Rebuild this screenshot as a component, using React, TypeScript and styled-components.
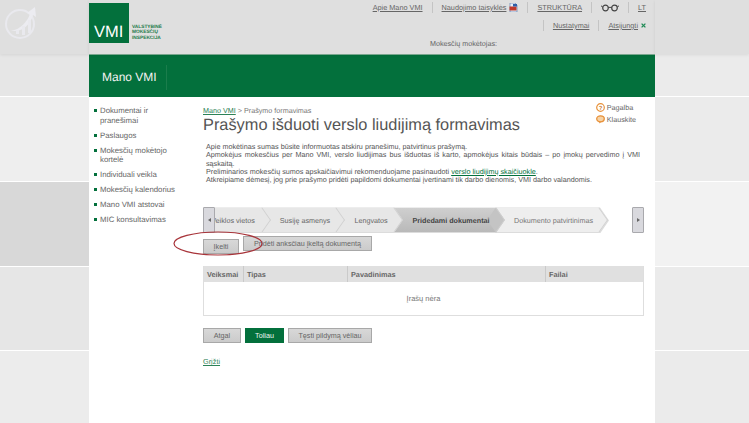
import React from "react";
import styled, { createGlobalStyle } from "styled-components";

const GlobalStyle = createGlobalStyle`
  html, body {
    margin: 0;
    padding: 0;
    height: 100%;
    overflow: hidden;
    background: #fff;
    font-family: "Liberation Sans", Arial, sans-serif;
    color: #555;
    text-rendering: geometricPrecision;
  }
`;

const Page = styled.div`
  width: 749px;
  height: 423px;
  display: grid;
  grid-template-columns: 89px 566px 94px;
  grid-template-rows: 54px 1fr;
  overflow: hidden;
  position: relative;
`;

const TopBand = styled.div`
  background: #dfdfdf;
  box-shadow: 0 1px 3px rgba(0, 0, 0, 0.08);
  position: relative;
  z-index: 1;
`;

const LogoCorner = styled(TopBand)`
  padding: 7px 0 0 5px;
`;

const Header = styled(TopBand)`
  display: flex;
  justify-content: space-between;
`;

const Logo = styled.div`
  display: flex;
  align-items: flex-end;
  gap: 3px;
  margin-top: 3px;
  height: 40px;
`;

const LogoBox = styled.div`
  width: 40px;
  height: 40px;
  background: #03703c;
  color: #fff;
  font-size: 16.5px;
  line-height: 16px;
  padding: 21px 0 0 5px;
  box-sizing: border-box;
`;

const LogoText = styled.div`
  color: #1d7a4a;
  font-size: 4.8px;
  line-height: 5.4px;
  font-weight: 700;
  padding-bottom: 2px;
`;

const HeaderRight = styled.div`
  display: flex;
  flex-direction: column;
  align-items: flex-end;
  padding-right: 9px;
`;

const NavRow = styled.div<{ $top: number }>`
  display: flex;
  align-items: center;
  height: 11px;
  margin-top: ${({ $top }) => $top}px;
  font-size: 7.3px;
  color: #666;
`;

const NavLink = styled.a`
  color: #666;
  text-decoration: underline;
  display: inline-flex;
  align-items: center;
  gap: 3px;
`;

const NavSep = styled.span`
  width: 1px;
  height: 11px;
  background: #c4c4c4;
  margin: 0 9px;
`;

const CloseMark = styled.span`
  display: inline-flex;
  margin-left: 3px;
`;

const Payer = styled.div`
  font-size: 7.2px;
  line-height: 11px;
  color: #666;
  margin-top: 7px;
  margin-right: 149px;
`;

const SideColumn = styled.div`
  display: flex;
  flex-direction: column;
  gap: 1px;
  background: #fff;
`;

const Band = styled.div<{ $h: number; $bg: string }>`
  height: ${({ $h }) => $h}px;
  flex: none;
  background: ${({ $bg }) => $bg};
`;

const Center = styled.div`
  display: flex;
  flex-direction: column;
  background: #fff;
`;

const Hero = styled.div`
  height: 43px;
  flex: none;
  box-sizing: border-box;
  background: #03703c;
  border-top: 1px solid #7fb096;
  display: flex;
  align-items: center;
  padding-left: 13px;
  color: #f2f2f2;
  font-size: 12px;
`;

const HeroTitle = styled.div`
  padding-right: 9px;
  line-height: 25px;
  border-right: 1px solid #1b7d4c;
  margin-top: 3px;
`;

const Body = styled.div`
  display: grid;
  grid-template-columns: 114px 441px;
  padding-top: 9px;
`;

const SideNav = styled.ul`
  list-style: none;
  margin: 0;
  padding: 0 0 0 5px;
`;

const SideItem = styled.li`
  position: relative;
  padding-left: 6px;
  font-size: 7.8px;
  line-height: 9.5px;
  color: #666;
  margin-bottom: 5.5px;
  width: 78px;

  &::before {
    content: "";
    position: absolute;
    left: 0;
    top: 3px;
    width: 3px;
    height: 3px;
    background: #03703c;
  }
`;

const Content = styled.div`
  display: flex;
  flex-direction: column;
`;

const TitleRow = styled.div`
  display: flex;
  justify-content: space-between;
`;

const Breadcrumb = styled.div`
  font-size: 7.2px;
  line-height: 10px;
  color: #777;
  a {
    color: #2c8257;
    text-decoration: underline;
  }
`;

const Title = styled.h1`
  margin: -1px 0 0;
  font-weight: 400;
  font-size: 16.35px;
  line-height: 21px;
  color: #555;
  white-space: nowrap;
`;

const HelpList = styled.div`
  display: flex;
  flex-direction: column;
  gap: 3px;
  padding-right: 8px;
  margin-top: -3px;
`;

const HelpLink = styled.div`
  display: flex;
  align-items: center;
  gap: 2px;
  font-size: 7.2px;
  line-height: 9px;
  color: #666;
`;

const Intro = styled.div`
  margin: 7px 4px 0 3px;
  font-size: 7.22px;
  line-height: 8.3px;
  color: #555;

  p {
    margin: 0;
    text-align: justify;
  }
  a {
    color: #03703c;
    text-decoration: underline;
  }
`;

const Stepper = styled.div`
  position: relative;
  margin-top: 23px;
  height: 26px;
`;

const StepTrack = styled.div`
  width: 406px;
  height: 26px;
  display: flex;
  overflow: hidden;
  box-sizing: border-box;
  clip-path: polygon(0 0, 397px 0, 100% 50%, 397px 100%, 0 100%);
  background: #dcdcdc;
`;

const Step = styled.div<{ $w: number; $kind?: "active" | "next" }>`
  position: relative;
  flex: none;
  box-sizing: border-box;
  width: ${({ $w }) => $w}px;
  padding-left: 10px;
  display: flex;
  align-items: center;
  justify-content: center;
  margin: 1px 0;
  font-size: 7.2px;
  white-space: nowrap;
  color: ${({ $kind }) =>
    $kind === "active" ? "#444" : $kind === "next" ? "#777" : "#666"};
  font-weight: ${({ $kind }) => ($kind === "active" ? 700 : 400)};
  background: ${({ $kind }) =>
    $kind === "active"
      ? "linear-gradient(#cfcfcf, #b9b9b9)"
      : $kind === "next"
        ? "#eeeeee"
        : "#e7e7e7"};

  &:first-child {
    padding-left: 0;
  }

  &::after {
    content: "";
    position: absolute;
    right: -8px;
    top: 50%;
    width: 17px;
    height: 17px;
    transform: translateY(-50%) scaleX(0.7) rotate(45deg);
    background: ${({ $kind }) =>
      $kind === "active" ? "#c4c4c4" : $kind === "next" ? "#eeeeee" : "#e7e7e7"};
    border-top: 1px solid #d0d0d0;
    border-right: 1px solid #d0d0d0;
    z-index: 1;
  }
`;

const StepLabel = styled.span`
  position: relative;
  z-index: 2;
`;

const StepArrow = styled.div<{ $side: "left" | "right" }>`
  position: absolute;
  top: 0;
  ${({ $side }) => ($side === "left" ? "left: 0;" : "right: 0;")}
  width: 12px;
  height: 26px;
  box-sizing: border-box;
  z-index: 3;
  background: #d9d9de;
  border: 1px solid #a9a9ad;
  border-radius: 1px;
  display: flex;
  align-items: center;
  justify-content: center;

  &::before {
    content: "";
    border-top: 2px solid transparent;
    border-bottom: 2px solid transparent;
    ${({ $side }) =>
      $side === "left"
        ? "border-right: 3px solid #666;"
        : "border-left: 3px solid #666;"}
  }
`;

const ButtonRow = styled.div<{ $top: number }>`
  display: flex;
  gap: 4px;
  margin-top: ${({ $top }) => $top}px;
`;

const Button = styled.button<{ $w: number; $primary?: boolean }>`
  width: ${({ $w }) => $w}px;
  height: 15px;
  padding: 0;
  box-sizing: border-box;
  font-family: inherit;
  font-size: 7.2px;
  color: ${({ $primary }) => ($primary ? "#eef5f0" : "#666")};
  background: ${({ $primary }) =>
    $primary ? "#03703c" : "linear-gradient(#d8d8d8, #cbcbcb)"};
  border: 1px solid ${({ $primary }) => ($primary ? "#03703c" : "#a8a8a8")};
`;

const UploadWrap = styled.div`
  position: relative;
`;

const Ellipse = styled.svg`
  position: absolute;
  left: -30px;
  top: -5px;
  width: 90px;
  height: 25px;
  z-index: 3;
  pointer-events: none;
`;

const Table = styled.div`
  margin-top: 12px;
  border: 1px solid #dedede;
  border-top: 0;
  height: 50px;
  box-sizing: border-box;
`;

const TableHead = styled.div`
  display: grid;
  grid-template-columns: 40px 104px 198px 1fr;
  height: 16px;
  background: #e0e0e0;
  font-size: 7.3px;
  font-weight: 700;
  color: #666;
`;

const HeadCell = styled.div`
  display: flex;
  align-items: center;
  padding-left: 3px;
  border-right: 1px solid #cacaca;

  &:last-child {
    border-right: 0;
  }
`;

const EmptyRow = styled.div`
  height: 33px;
  display: flex;
  align-items: center;
  justify-content: center;
  font-size: 7.5px;
  color: #777;
`;

const BackLink = styled.a`
  display: block;
  margin-top: 14px;
  font-size: 7.3px;
  line-height: 10px;
  color: #2c8257;
  text-decoration: underline;
`;

const menu = [
  "Dokumentai ir pranešimai",
  "Paslaugos",
  "Mokesčių mokėtojo kortelė",
  "Individuali veikla",
  "Mokesčių kalendorius",
  "Mano VMI atstovai",
  "MIC konsultavimas",
];

const leftBands: [number, string][] = [
  [42, "#e6e6e6"],
  [84, "#eeeeee"],
  [84, "#d8d8d8"],
  [83, "#e6e6e6"],
  [80, "#ececec"],
];

const rightBands: [number, string][] = [
  [42, "#ebebeb"],
  [84, "#ebebeb"],
  [84, "#f2f2f2"],
  [83, "#ebebeb"],
  [80, "#ebebeb"],
];

const CornerMark = () => (
  <svg width="32" height="32" viewBox="0 0 32 32">
    <circle cx="15" cy="17" r="14" fill="none" stroke="#e9e9ee" strokeWidth="2" />
    <path d="M6 24 C16 22 22 15 25 7 L22 6 L30 0 L31 10 L28 8 C25 18 18 25 6 24Z" fill="#ececf1" />
    <path d="M11 27h3v-4h-3zM17 28h3V19h-3zM23 26h3V13h-3z" fill="#e9e9ee" />
  </svg>
);

const FileIcon = () => (
  <svg width="9" height="9" viewBox="0 0 9 9">
    <path d="M1 0h5l2 2v7H1z" fill="#e8eef6" stroke="#4a74b0" strokeWidth="0.6" />
    <rect x="0.5" y="3.5" width="7" height="4" fill="#c0392b" />
    <rect x="4" y="1" width="4" height="2.5" fill="#2f5fa8" />
  </svg>
);

const GlassesIcon = () => (
  <svg width="18" height="8" viewBox="0 0 18 8">
    <circle cx="4.5" cy="4" r="2.8" fill="none" stroke="#444" strokeWidth="1.2" />
    <circle cx="13.5" cy="4" r="2.8" fill="none" stroke="#444" strokeWidth="1.2" />
    <path d="M7.2 3.4h3.6M1.7 3L0 1.8M16.3 3L18 1.8" stroke="#444" strokeWidth="1" />
  </svg>
);

const CloseIcon = () => (
  <svg width="5" height="5" viewBox="0 0 5 5">
    <path d="M0.6 0.6L4.4 4.4M4.4 0.6L0.6 4.4" stroke="#1f8a55" strokeWidth="1.3" />
  </svg>
);

const QuestionIcon = () => (
  <svg width="9" height="9" viewBox="0 0 9 9">
    <circle cx="4.5" cy="4.5" r="3.8" fill="#fff" stroke="#e8913a" strokeWidth="1.2" />
    <text x="4.5" y="6.6" fontSize="6" fontWeight="700" textAnchor="middle" fill="#c77a28" fontFamily="Liberation Sans">
      ?
    </text>
  </svg>
);

const BubbleIcon = () => (
  <svg width="9" height="9" viewBox="0 0 9 9">
    <ellipse cx="4.5" cy="3.8" rx="3.8" ry="3" fill="#f6d3a6" stroke="#e8913a" strokeWidth="1.3" />
    <path d="M3 6.5L3.6 8.6L5.4 6.6" fill="#e8913a" />
  </svg>
);

const App: React.FC = () => {
  return (
    <>
      <GlobalStyle />
      <Page>
        <LogoCorner>
          <CornerMark />
        </LogoCorner>
        <Header>
          <Logo>
            <LogoBox>VMI</LogoBox>
            <LogoText>
              VALSTYBINĖ
              <br />
              MOKESČIŲ
              <br />
              INSPEKCIJA
            </LogoText>
          </Logo>
          <HeaderRight>
            <NavRow $top={2}>
              <NavLink>Apie Mano VMI</NavLink>
              <NavSep />
              <NavLink>
                Naudojimo taisyklės
                <FileIcon />
              </NavLink>
              <NavSep />
              <NavLink>STRUKTŪRA</NavLink>
              <NavSep />
              <GlassesIcon />
              <NavSep />
              <NavLink>LT</NavLink>
            </NavRow>
            <NavRow $top={7}>
              <NavSep />
              <NavLink>Nustatymai</NavLink>
              <NavSep />
              <NavLink>Atsijungti</NavLink>
              <CloseMark>
                <CloseIcon />
              </CloseMark>
            </NavRow>
            <Payer>Mokesčių mokėtojas:</Payer>
          </HeaderRight>
        </Header>
        <TopBand />
        <SideColumn>
          {leftBands.map(([h, bg], i) => (
            <Band key={i} $h={h} $bg={bg} />
          ))}
        </SideColumn>
        <Center>
          <Hero>
            <HeroTitle>Mano VMI</HeroTitle>
          </Hero>
          <Body>
            <SideNav>
              {menu.map((item) => (
                <SideItem key={item}>{item}</SideItem>
              ))}
            </SideNav>
            <Content>
              <TitleRow>
                <div>
                  <Breadcrumb>
                    <a>Mano VMI</a> &gt; Prašymo formavimas
                  </Breadcrumb>
                  <Title>Prašymo išduoti verslo liudijimą formavimas</Title>
                </div>
                <HelpList>
                  <HelpLink>
                    <QuestionIcon />
                    Pagalba
                  </HelpLink>
                  <HelpLink>
                    <BubbleIcon />
                    Klauskite
                  </HelpLink>
                </HelpList>
              </TitleRow>
              <Intro>
                <p>Apie mokėtinas sumas būsite informuotas atskiru pranešimu, patvirtinus prašymą.</p>
                <p>
                  Apmokėjus mokesčius per Mano VMI, verslo liudijimas bus išduotas iš karto, apmokėjus kitais
                  būdais – po įmokų pervedimo į VMI sąskaitą.
                </p>
                <p>
                  Preliminarios mokesčių sumos apskaičiavimui rekomenduojame pasinaudoti{" "}
                  <a>verslo liudijimų skaičiuokle</a>.
                </p>
                <p>
                  Atkreipiame dėmesį, jog prie prašymo pridėti papildomi dokumentai įvertinami tik darbo
                  dienomis, VMI darbo valandomis.
                </p>
              </Intro>
              <Stepper>
                <StepArrow $side="left" />
                <StepTrack>
                  <Step $w={60}>
                    <StepLabel>Veiklos vietos</StepLabel>
                  </Step>
                  <Step $w={74}>
                    <StepLabel>Susiję asmenys</StepLabel>
                  </Step>
                  <Step $w={58}>
                    <StepLabel>Lengvatos</StepLabel>
                  </Step>
                  <Step $w={102} $kind="active">
                    <StepLabel>Pridedami dokumentai</StepLabel>
                  </Step>
                  <Step $w={103} $kind="next">
                    <StepLabel>Dokumento patvirtinimas</StepLabel>
                  </Step>
                </StepTrack>
                <StepArrow $side="right" />
              </Stepper>
              <ButtonRow $top={3}>
                <UploadWrap>
                  <Button $w={36}>Įkelti</Button>
                  <Ellipse viewBox="0 0 90 25">
                    <ellipse cx="45" cy="12.5" rx="44" ry="11.5" fill="none" stroke="#a8343a" strokeWidth="1.2" />
                  </Ellipse>
                </UploadWrap>
                <Button $w={129}>Pridėti anksčiau įkeltą dokumentą</Button>
              </ButtonRow>
              <Table>
                <TableHead>
                  <HeadCell>Veiksmai</HeadCell>
                  <HeadCell>Tipas</HeadCell>
                  <HeadCell>Pavadinimas</HeadCell>
                  <HeadCell>Failai</HeadCell>
                </TableHead>
                <EmptyRow>Įrašų nėra</EmptyRow>
              </Table>
              <ButtonRow $top={12}>
                <Button $w={38}>Atgal</Button>
                <Button $w={39} $primary>
                  Toliau
                </Button>
                <Button $w={84}>Tęsti pildymą vėliau</Button>
              </ButtonRow>
              <BackLink>Grįžti</BackLink>
            </Content>
          </Body>
        </Center>
        <SideColumn>
          {rightBands.map(([h, bg], i) => (
            <Band key={i} $h={h} $bg={bg} />
          ))}
        </SideColumn>
      </Page>
    </>
  );
};

export default App;
